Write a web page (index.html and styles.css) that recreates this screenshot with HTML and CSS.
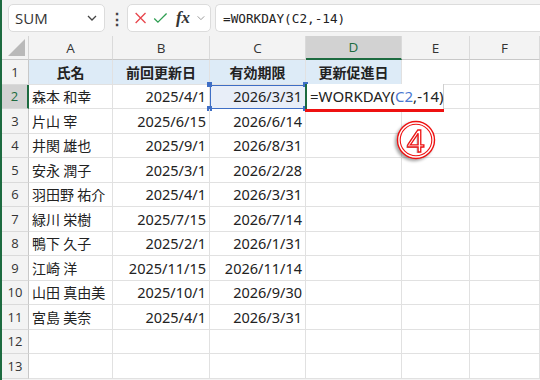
FILE: index.html
```html
<!DOCTYPE html>
<html lang="ja">
<head>
  <meta charset="UTF-8">
  <title>WORKDAY</title>
  <link rel="stylesheet" href="styles.css">
</head>
<body>
  <div class="app">
    <!-- formula bar -->
    <div class="fbar">
      <div class="namebox">
        <span>SUM</span>
        <svg class="chev" width="12" height="8" viewBox="0 0 12 8"><path d="M2 2 L6 6 L10 2" fill="none" stroke="#444" stroke-width="1.3"/></svg>
      </div>
      <div class="dots">⋮</div>
      <div class="fxbox">
        <svg width="16" height="16" viewBox="0 0 16 16"><path d="M2 2 L14 14 M14 2 L2 14" stroke="#e8464d" stroke-width="1.6"/></svg>
        <svg width="18" height="16" viewBox="0 0 18 16"><path d="M1.5 8.5 L6 13 L16.5 2.5" fill="none" stroke="#2f9e52" stroke-width="1.6"/></svg>
        <span class="fx">fx</span>
        <svg class="chev" width="12" height="8" viewBox="0 0 12 8"><path d="M2 2 L6 6 L10 2" fill="none" stroke="#999" stroke-width="1.2"/></svg>
      </div>
      <div class="formula">=WORKDAY(C2,-14)</div>
    </div>

    <!-- sheet -->
    <div class="sheet">
      <div class="corner"></div>
      <div class="colhead">A</div>
      <div class="colhead">B</div>
      <div class="colhead">C</div>
      <div class="colhead sel">D</div>
      <div class="colhead">E</div>
      <div class="colhead">F</div>

      <div class="rowhead">1</div>
      <div class="cell th">氏名</div>
      <div class="cell th">前回更新日</div>
      <div class="cell th">有効期限</div>
      <div class="cell th">更新促進日</div>
      <div class="cell"></div>
      <div class="cell"></div>

      <div class="rowhead sel">2</div>
      <div class="cell">森本 和幸</div>
      <div class="cell num">2025/4/1</div>
      <div class="cell num ref">2026/3/31
        <i class="h tl"></i><i class="h tr"></i><i class="h bl"></i><i class="h br"></i>
      </div>
      <div class="cell active">
        <div class="edit">=WORKDAY(<span class="blue">C2</span>,-14)</div>
        <div class="underline"></div>
        <div class="badge">
          <svg width="44" height="44" viewBox="0 0 44 44">
            <circle cx="21" cy="20" r="18.5" fill="#fff" stroke="#ee1111" stroke-width="1.4"/>
            <circle cx="21" cy="20" r="15.8" fill="none" stroke="#ee1111" stroke-width="1.1"/>
            <text x="19.5" y="33" class="num-shadow">4</text>
            <text x="21" y="31.5" class="num-text">4</text>
          </svg>
        </div>
      </div>
      <div class="cell"></div>
      <div class="cell"></div>

      <div class="rowhead">3</div>
      <div class="cell">片山 宰</div>
      <div class="cell num">2025/6/15</div>
      <div class="cell num">2026/6/14</div>
      <div class="cell"></div>
      <div class="cell"></div>
      <div class="cell"></div>

      <div class="rowhead">4</div>
      <div class="cell">井関 雄也</div>
      <div class="cell num">2025/9/1</div>
      <div class="cell num">2026/8/31</div>
      <div class="cell"></div>
      <div class="cell"></div>
      <div class="cell"></div>

      <div class="rowhead">5</div>
      <div class="cell">安永 潤子</div>
      <div class="cell num">2025/3/1</div>
      <div class="cell num">2026/2/28</div>
      <div class="cell"></div>
      <div class="cell"></div>
      <div class="cell"></div>

      <div class="rowhead">6</div>
      <div class="cell">羽田野 祐介</div>
      <div class="cell num">2025/4/1</div>
      <div class="cell num">2026/3/31</div>
      <div class="cell"></div>
      <div class="cell"></div>
      <div class="cell"></div>

      <div class="rowhead">7</div>
      <div class="cell">緑川 栄樹</div>
      <div class="cell num">2025/7/15</div>
      <div class="cell num">2026/7/14</div>
      <div class="cell"></div>
      <div class="cell"></div>
      <div class="cell"></div>

      <div class="rowhead">8</div>
      <div class="cell">鴨下 久子</div>
      <div class="cell num">2025/2/1</div>
      <div class="cell num">2026/1/31</div>
      <div class="cell"></div>
      <div class="cell"></div>
      <div class="cell"></div>

      <div class="rowhead">9</div>
      <div class="cell">江崎 洋</div>
      <div class="cell num">2025/11/15</div>
      <div class="cell num">2026/11/14</div>
      <div class="cell"></div>
      <div class="cell"></div>
      <div class="cell"></div>

      <div class="rowhead">10</div>
      <div class="cell">山田 真由美</div>
      <div class="cell num">2025/10/1</div>
      <div class="cell num">2026/9/30</div>
      <div class="cell"></div>
      <div class="cell"></div>
      <div class="cell"></div>

      <div class="rowhead">11</div>
      <div class="cell">宮島 美奈</div>
      <div class="cell num">2025/4/1</div>
      <div class="cell num">2026/3/31</div>
      <div class="cell"></div>
      <div class="cell"></div>
      <div class="cell"></div>

      <div class="rowhead">12</div>
      <div class="cell"></div>
      <div class="cell"></div>
      <div class="cell"></div>
      <div class="cell"></div>
      <div class="cell"></div>
      <div class="cell"></div>

      <div class="rowhead">13</div>
      <div class="cell"></div>
      <div class="cell"></div>
      <div class="cell"></div>
      <div class="cell"></div>
      <div class="cell"></div>
      <div class="cell"></div>
    </div>
  </div>
</body>
</html>
```

FILE: styles.css
```css
body {
  margin: 0;
  background: #fff;
  font-family: "Noto Sans CJK JP", sans-serif;
  color: #222;
}

.app {
  width: 538px;
  height: 380px;
  overflow: hidden;
  border-left: 2px solid #1d6b40;
  background: #f3f3f3;
}

/* formula bar */
.fbar {
  height: 36px;
  display: flex;
  align-items: center;
  padding: 0 0 0 6px;
  gap: 4px;
}

.namebox {
  width: 97px;
  height: 28px;
  box-sizing: border-box;
  background: #fff;
  border: 1px solid #dcdcdc;
  border-radius: 5px;
  display: flex;
  align-items: center;
  justify-content: space-between;
  padding: 0 6px 0 6px;
  font-family: "Open Sans", sans-serif;
  font-size: 15px;
  color: #333;
}

.dots {
  width: 14px;
  text-align: center;
  font-size: 16px;
  font-weight: bold;
  color: #444;
}

.fxbox {
  width: 84px;
  height: 28px;
  box-sizing: border-box;
  background: #fff;
  border: 1px solid #dcdcdc;
  border-radius: 5px;
  display: flex;
  align-items: center;
  gap: 6px;
  padding: 0 4px 0 6px;
}

.fx {
  font-family: "Liberation Serif", serif;
  font-style: italic;
  font-weight: bold;
  font-size: 17px;
  color: #333;
  margin-left: 2px;
}

.formula {
  flex: 1;
  height: 28px;
  box-sizing: border-box;
  background: #fff;
  border: 1px solid #dcdcdc;
  border-right: none;
  border-radius: 5px 0 0 5px;
  display: flex;
  align-items: center;
  padding-left: 7px;
  font-family: "DejaVu Sans Mono", monospace;
  font-size: 12.7px;
  color: #222;
}

/* sheet grid */
.sheet {
  display: grid;
  grid-template-columns: 27px 84px 97px 96px 96px 68px 70px;
  grid-template-rows: 24px repeat(13, 24.5px);
  background: #fff;
}

.corner {
  background: #f3f3f3;
  border-right: 1px solid #d4d4d4;
  border-bottom: 1px solid #c8c8c8;
  position: relative;
}

.corner::after {
  content: "";
  position: absolute;
  right: 3px;
  bottom: 3px;
  border-left: 17px solid transparent;
  border-bottom: 17px solid #b9b9b9;
}

.colhead {
  background: #f3f3f3;
  border-right: 1px solid #dadada;
  border-bottom: 1px solid #c8c8c8;
  display: flex;
  align-items: center;
  justify-content: center;
  font-family: "Open Sans", sans-serif;
  font-size: 13.5px;
  color: #333;
}

.colhead.sel {
  background: #d2d2d2;
  color: #1d6b40;
  border-bottom: 2px solid #1d6b40;
}

.rowhead {
  background: #f3f3f3;
  border-right: 1px solid #c8c8c8;
  border-bottom: 1px solid #dadada;
  display: flex;
  align-items: center;
  justify-content: center;
  font-family: "Open Sans", sans-serif;
  font-size: 13px;
  color: #333;
}

.rowhead.sel {
  background: #d2d2d2;
  color: #1d6b40;
  border-right: 2px solid #1d6b40;
}

.cell {
  box-sizing: border-box;
  border-right: 1px solid #e1e1e1;
  border-bottom: 1px solid #e1e1e1;
  display: flex;
  align-items: center;
  padding: 0 3px;
  font-size: 14px;
  white-space: nowrap;
  position: relative;
}

.cell.num {
  justify-content: flex-end;
  font-family: "Noto Sans", sans-serif;
  font-size: 14.5px;
}

.cell.th {
  background: #ddebf7;
  font-weight: bold;
  justify-content: center;
}

/* referenced cell C2 */
.cell.ref {
  background: #e8eef8;
  outline: 1px solid #3e6ec5;
  outline-offset: -1px;
}

.h {
  position: absolute;
  width: 5px;
  height: 5px;
  background: #3e6ec5;
}
.h.tl { left: -3px; top: -3px; }
.h.tr { right: -3px; top: -3px; }
.h.bl { left: -3px; bottom: -3px; }
.h.br { right: -3px; bottom: -3px; }

/* active cell in edit mode */
.cell.active {
  overflow: visible;
  z-index: 2;
}

.edit {
  position: absolute;
  left: -1px;
  top: -1px;
  height: 25px;
  width: 139px;
  box-sizing: border-box;
  background: #fff;
  border-left: 2px solid #1d6b40;
  border-right: 1px solid #cfcfcf;
  display: flex;
  align-items: center;
  padding-left: 3px;
  font-family: "Noto Sans", sans-serif;
  font-size: 15px;
  color: #222;
}

.blue {
  color: #4a78d0;
}

.underline {
  position: absolute;
  left: -1px;
  top: 24px;
  width: 139px;
  height: 3px;
  background: #ee1111;
}

.badge {
  position: absolute;
  left: 89px;
  top: 35px;
}

.badge svg {
  display: block;
  filter: drop-shadow(-2px 2px 1.5px rgba(0, 0, 0, 0.35));
}

.num-text,
.num-shadow {
  font-family: "Liberation Sans", sans-serif;
  font-size: 32px;
  text-anchor: middle;
}

.num-text {
  fill: #fff;
  stroke: #ee1111;
  stroke-width: 1.3;
}

.num-shadow {
  fill: #9a9a9a;
  opacity: 0.7;
}
```
